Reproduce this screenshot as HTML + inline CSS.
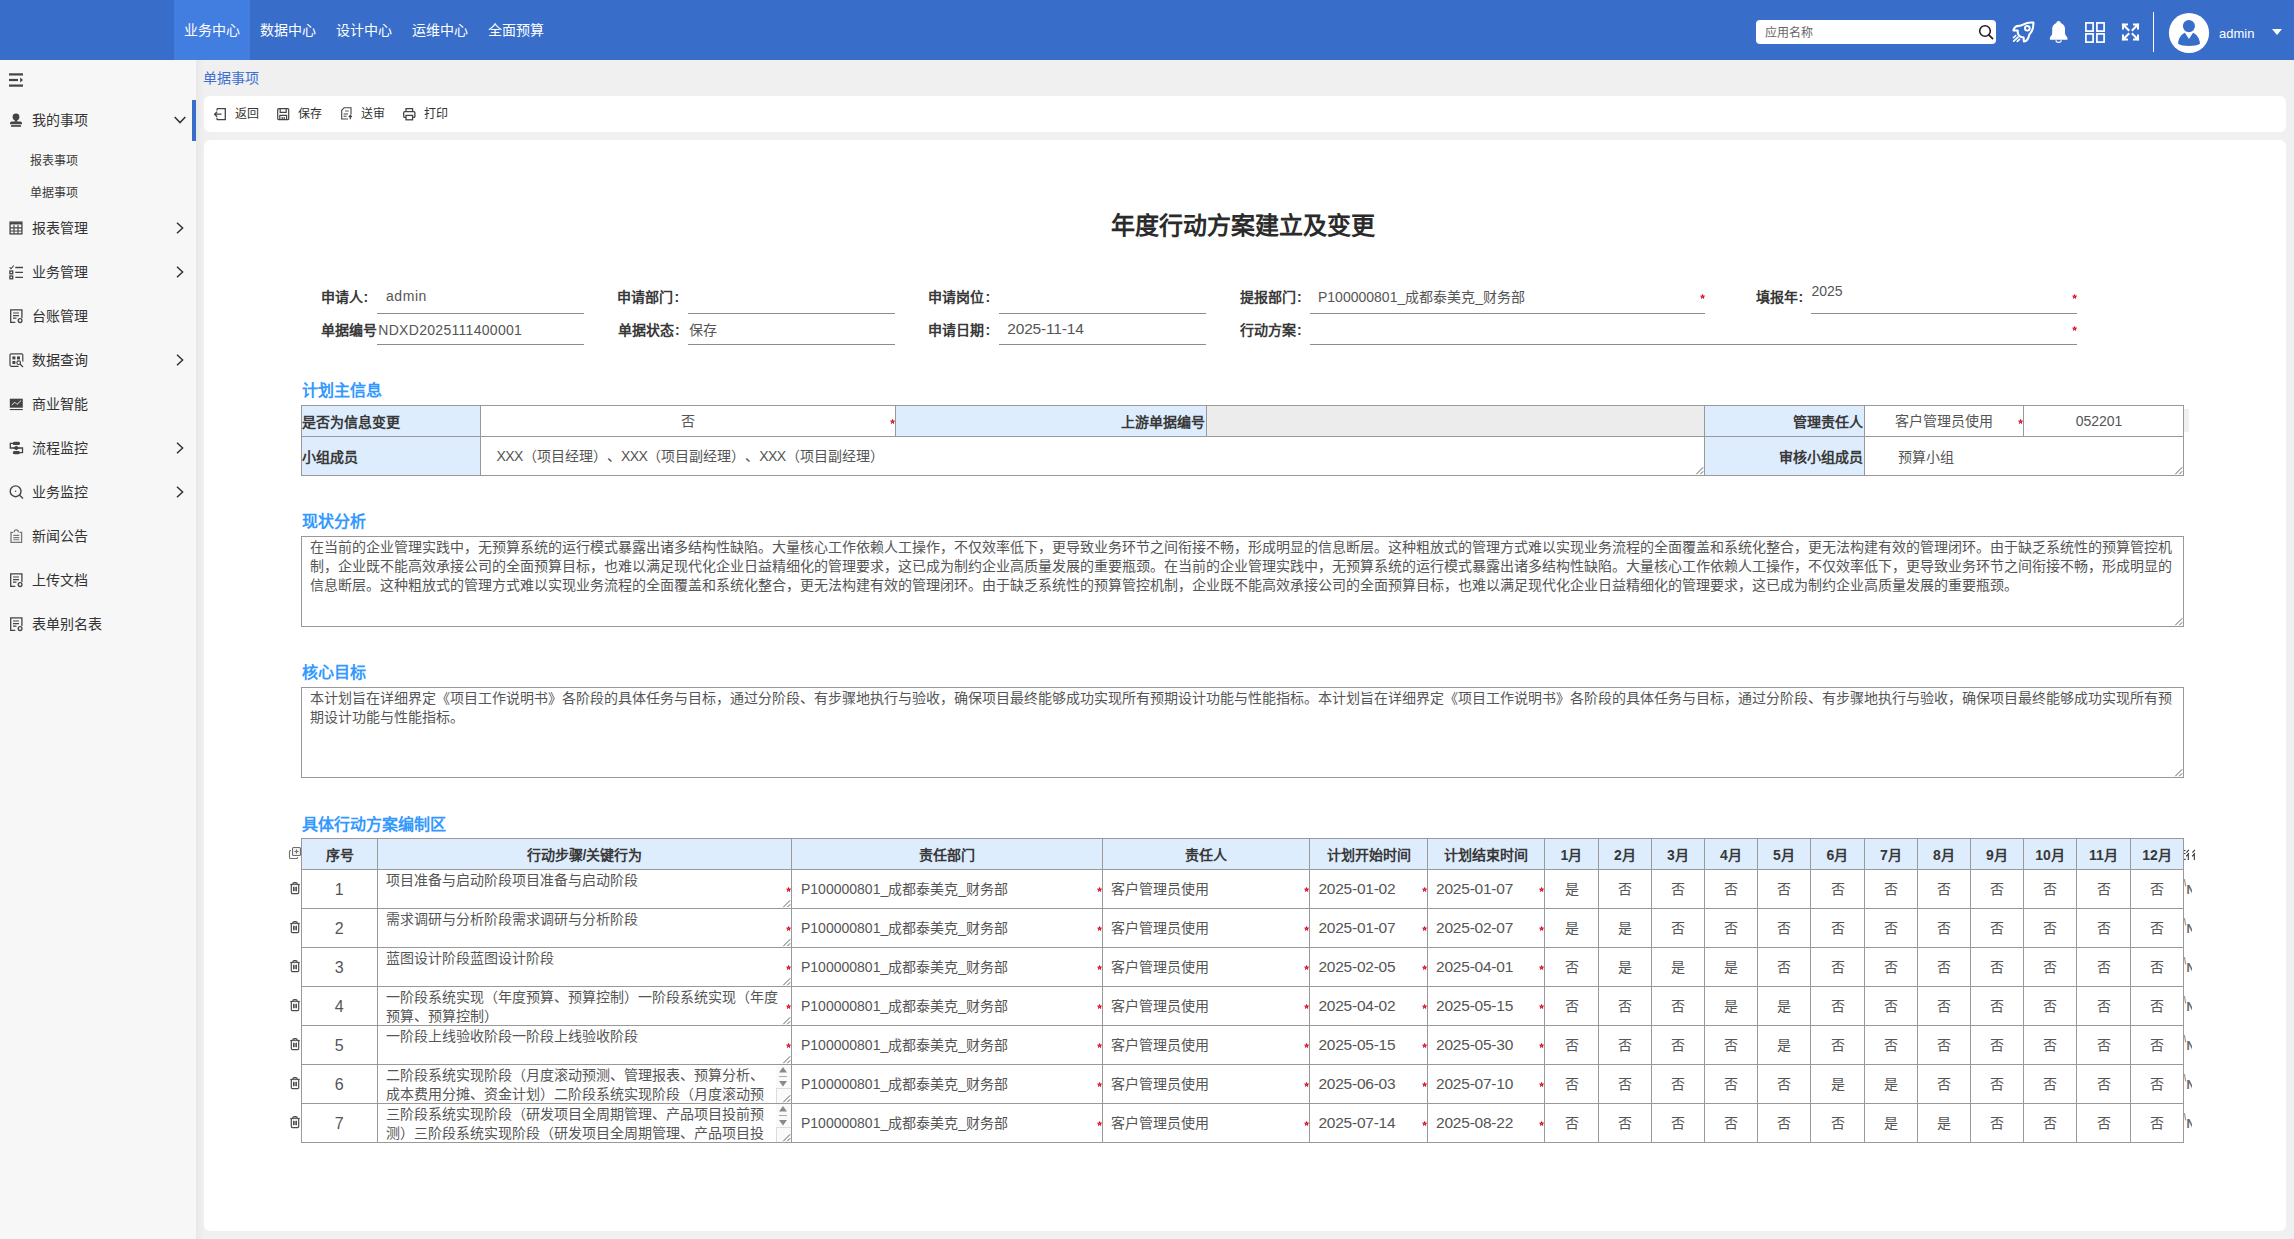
<!DOCTYPE html>
<html lang="zh-CN"><head><meta charset="utf-8"><title>年度行动方案建立及变更</title>
<style>
*{box-sizing:border-box;margin:0;padding:0}
html,body{width:2294px;height:1239px;overflow:hidden}
body{position:relative;text-spacing-trim:space-all;background:#f0f0f0;font-family:"Liberation Sans",sans-serif;color:#333;font-size:14px}
.a{position:absolute}
.t{position:absolute;white-space:nowrap;height:20px;line-height:20px}
.b{font-weight:bold;color:#383838}
.c{text-align:center}
.r{text-align:right}
.hl{position:absolute;height:1px;background:#999}
.vl{position:absolute;width:1px;background:#999}
.ul{position:absolute;height:1px;background:#8c8c8c}
.st{position:absolute;color:#d9001b;font-weight:bold;font-size:11px;line-height:12px;height:12px;width:8px;text-align:center}
svg{position:absolute;overflow:visible}
</style></head>
<body>
<header>
<div class="a" style="left:0px;top:0px;width:2294px;height:60px;background:#386ec9;"></div>
<div class="a" style="left:174px;top:0px;width:76px;height:60px;background:#427de0;"></div>
<div class="t c" style="left:174px;width:76px;top:20px;color:#fff;">业务中心</div>
<div class="t c" style="left:250px;width:76px;top:20px;color:#fff;">数据中心</div>
<div class="t c" style="left:326px;width:76px;top:20px;color:#fff;">设计中心</div>
<div class="t c" style="left:402px;width:76px;top:20px;color:#fff;">运维中心</div>
<div class="t c" style="left:478px;width:76px;top:20px;color:#fff;">全面预算</div>
<div class="a" style="left:1756px;top:20px;width:240px;height:24px;background:#fff;border-radius:4px;"></div>
<div class="t" style="left:1765px;top:22.5px;font-size:12px;color:#666;">应用名称</div>
<svg style="left:1978px;top:24px" width="16" height="16" viewBox="0 0 16 16"><circle cx="7" cy="7" r="5.3" fill="none" stroke="#222" stroke-width="1.6"/><path d="M10.8 10.8L14.6 14.6" stroke="#222" stroke-width="1.7" stroke-linecap="round"/></svg>
<svg style="left:2012px;top:21px" width="23" height="22" viewBox="0 0 23 22"><g fill="none" stroke="#fff" stroke-width="2.100" stroke-linejoin="round" stroke-linecap="round"><path d="M21.400 1.600C17.800 1.200 14.600 1.700 12.200 3.200C10.200 4.500 8.400 5.300 4.600 5.100C2.800 6 1.700 7.600 1.500 9.500L5.700 9.500C5.500 11.400 5.900 13.200 7 14.700C8.300 15.800 9.900 16.400 11.600 16.500L11.900 20.500C13.400 20.400 14.500 19.800 15.100 18.900C16.200 17.300 17 15.500 17.300 13.600C20.300 10.500 21.600 6.500 21.400 1.600Z"/><circle cx="15.300" cy="7.300" r="2.350" stroke-width="1.900"/><path d="M1.500 16.600L3.700 14.600M1.700 20.200L6.100 16.200M5.300 20.400L7.500 18.400" stroke-width="1.700"/></g></svg>
<svg style="left:2049px;top:21px" width="19" height="22.5" viewBox="0 0 19 22.5"><path d="M9.600 0.100C8.400 0.100 7.800 0.900 7.300 1.900C4.900 2.900 3.200 4.800 3.200 7.500V12C3.200 14 1.700 15.300 0.900 16.500V18.800H18.400V16.500C17.500 15.300 16 14 16 12V7.500C16 4.800 14.300 2.900 11.900 1.900C11.400 0.900 10.800 0.100 9.600 0.100Z" fill="#fff"/><path d="M7 19.200a2.600 2.200 0 0 0 5.200 0" fill="none" stroke="#fff" stroke-width="1.200"/></svg>
<svg style="left:2085px;top:21.5px" width="20" height="21" viewBox="0 0 20 21"><g fill="none" stroke="#fff" stroke-width="1.700"><rect x="0.900" y="0.900" width="7.200" height="8.200"/><rect x="11.900" y="0.900" width="7.200" height="8.200"/><rect x="0.900" y="11.900" width="7.200" height="8.200"/><rect x="11.900" y="11.900" width="7.200" height="8.200"/></g></svg>
<svg style="left:2121px;top:23px" width="19" height="18" viewBox="0 0 19 18"><g fill="none" stroke="#fff" stroke-width="2" stroke-linecap="square"><path d="M2 1.500L7.500 7M2 5.500V1.500H6"/><path d="M17 1.500L11.500 7M13 1.500H17V5.500"/><path d="M7.500 11L2 16.500M2 12.500V16.500H6"/><path d="M11.500 11L17 16.500M17 12.500V16.500H13"/></g></svg>
<div class="a" style="left:2153px;top:12px;width:1px;height:40px;background:#fff;"></div>
<svg style="left:2169px;top:12.8px" width="40" height="40" viewBox="0 0 40 40"><circle cx="20" cy="20" r="20.100" fill="#fff"/><circle cx="19.900" cy="13.100" r="6.050" fill="#386ec9"/><path d="M9.100 30.700C9.400 25.500 12 21.500 15.900 19.800L20 25.900 24 19.800C28 21.500 30.600 25.500 31 30.700C27 33.700 13 33.700 9.100 30.700Z" fill="#386ec9"/></svg>
<div class="t" style="left:2219px;top:23.5px;font-size:13px;color:#fff;">admin</div>
<svg style="left:2271.5px;top:28.8px" width="10" height="6" viewBox="0 0 10 6"><path d="M0 0H10L5 6Z" fill="#fff"/></svg>
</header>
<aside>
<div class="a" style="left:0px;top:60px;width:196px;height:1179px;background:#f7f7f7;"></div>
<div class="a" style="left:196px;top:60px;width:8px;height:1179px;background:linear-gradient(90deg,#e8e8e8,#f0f0f0);"></div>
<div class="a" style="left:192px;top:100px;width:4px;height:41px;background:#386ec9;"></div>
<svg style="left:9px;top:73px" width="15" height="14" viewBox="0 0 15 14"><g fill="#444"><rect x="0" y="0.300" width="14" height="2.200"/><rect x="0" y="5.900" width="9" height="2.200"/><rect x="0" y="11.500" width="14" height="2.200"/><path d="M11.100 4.500L14 7 11.100 9.500Z"/></g></svg>
<svg style="left:9px;top:113.2px" width="15" height="14" viewBox="0 0 15 14"><g fill="#444"><circle cx="7" cy="3.900" r="3.400"/><rect x="5.800" y="6" width="2.400" height="4"/><path d="M2.600 8.600H11.400Q13 8.600 13 10.200V11.300H1V10.200Q1 8.600 2.600 8.600Z"/><rect x="2" y="12.100" width="10" height="1.700"/></g></svg>
<div class="t" style="left:32px;top:110px;">我的事项</div>
<svg style="left:174px;top:115.5px" width="12" height="8" viewBox="0 0 12 8"><path d="M0.700 1L6 6.600 11.300 1" fill="none" stroke="#333" stroke-width="1.500"/></svg>
<div class="t" style="left:30px;top:151px;font-size:12px;color:#3a3a3a;">报表事项</div>
<div class="t" style="left:30px;top:183px;font-size:12px;color:#3a3a3a;">单据事项</div>
<svg style="left:9px;top:221px" width="15" height="14" viewBox="0 0 15 14"><g fill="none" stroke="#444"><rect x="1.100" y="1.100" width="11.800" height="11.800" stroke-width="1.300"/><path d="M1 2.400H13" stroke-width="2.100"/><path d="M1 6.900H13M1 10H13M5 4V13M9 4V13" stroke-width="1.100"/></g></svg>
<div class="t" style="left:32px;width:140px;overflow:hidden;top:218px;">报表管理</div>
<svg style="left:176px;top:222px" width="8" height="12" viewBox="0 0 8 12"><path d="M1 0.700L6.600 6 1 11.300" fill="none" stroke="#333" stroke-width="1.500"/></svg>
<svg style="left:9px;top:265px" width="15" height="14" viewBox="0 0 15 14"><g fill="none" stroke="#444" stroke-width="1.300"><path d="M0.600 2.300L2 3.700 4.800 0.500" stroke-width="1.100"/><rect x="0.900" y="6" width="2.800" height="2.800"/><rect x="0.900" y="11" width="2.800" height="2.800"/><path d="M6.300 2.500H14M6.300 7.400H14M6.300 12.400H14"/></g></svg>
<div class="t" style="left:32px;width:140px;overflow:hidden;top:262px;">业务管理</div>
<svg style="left:176px;top:266px" width="8" height="12" viewBox="0 0 8 12"><path d="M1 0.700L6.600 6 1 11.300" fill="none" stroke="#333" stroke-width="1.500"/></svg>
<svg style="left:9px;top:309px" width="15" height="14" viewBox="0 0 15 14"><g fill="none" stroke="#444" stroke-width="1.300"><path d="M6.300 13.300H1.700V0.900H12.900V9"/><path d="M4 4H10M4 6.600H10M4 9.200H7.500" stroke-width="1.200"/><circle cx="11.100" cy="11.600" r="1.900"/></g></svg>
<div class="t" style="left:32px;width:140px;overflow:hidden;top:306px;">台账管理</div>
<svg style="left:9px;top:353px" width="15" height="14" viewBox="0 0 15 14"><g fill="none" stroke="#444" stroke-width="1.200"><path d="M9.500 13.300H2.200Q1 13.300 1 12.100V2.100Q1 0.900 2.200 0.900H12.600Q13.800 0.900 13.800 2.100V8.500"/><g fill="#444" stroke="none"><rect x="3.400" y="3.400" width="3" height="3"/><rect x="8" y="3.400" width="3" height="3"/><rect x="3.400" y="8" width="3" height="3"/></g><circle cx="9.700" cy="9.700" r="1.800"/><path d="M11 11L14 14"/></g></svg>
<div class="t" style="left:32px;width:140px;overflow:hidden;top:350px;">数据查询</div>
<svg style="left:176px;top:354px" width="8" height="12" viewBox="0 0 8 12"><path d="M1 0.700L6.600 6 1 11.300" fill="none" stroke="#333" stroke-width="1.500"/></svg>
<svg style="left:9px;top:397px" width="15" height="14" viewBox="0 0 15 14"><g><rect x="0.800" y="1.700" width="13" height="9" fill="#444"/><rect x="0.800" y="12" width="13" height="1.100" fill="#444"/><path d="M2.800 8L5.800 5.200 8 7.400 12.200 3.400" fill="none" stroke="#f7f7f7" stroke-width="0.900"/></g></svg>
<div class="t" style="left:32px;width:140px;overflow:hidden;top:394px;">商业智能</div>
<svg style="left:9px;top:441px" width="15" height="14" viewBox="0 0 15 14"><g fill="none" stroke="#444" stroke-width="1.300"><rect x="4.400" y="1.400" width="6" height="2" rx="1" fill="#444"/><rect x="4.400" y="10.600" width="6" height="2" rx="1" fill="#444"/><path d="M7.300 5.600L9.600 7 7.300 8.400 5 7Z" fill="#444"/><path d="M4.400 2.400H1.300V7H5M10.400 11.600H13.500V7H9.600"/></g></svg>
<div class="t" style="left:32px;width:140px;overflow:hidden;top:438px;">流程监控</div>
<svg style="left:176px;top:442px" width="8" height="12" viewBox="0 0 8 12"><path d="M1 0.700L6.600 6 1 11.300" fill="none" stroke="#333" stroke-width="1.500"/></svg>
<svg style="left:9px;top:485px" width="15" height="14" viewBox="0 0 15 14"><g fill="none" stroke="#444" stroke-width="1.400"><circle cx="6.600" cy="6.300" r="5.400"/><path d="M10.600 10.300L14 13.600"/><circle cx="6.600" cy="6.300" r="0.700" fill="#444" stroke="none"/></g></svg>
<div class="t" style="left:32px;width:140px;overflow:hidden;top:482px;">业务监控</div>
<svg style="left:176px;top:486px" width="8" height="12" viewBox="0 0 8 12"><path d="M1 0.700L6.600 6 1 11.300" fill="none" stroke="#333" stroke-width="1.500"/></svg>
<svg style="left:9px;top:529px" width="15" height="14" viewBox="0 0 15 14"><g fill="none" stroke="#777" stroke-width="1.300"><!--#444--><path d="M4.200 3.300H2V13.300H12.600V3.300H10.400"/><path d="M5.300 3.300Q5.300 0.800 7.300 0.800Q9.300 0.800 9.300 3.300" /><path d="M4.300 6.400H10.300M4.300 8.600H10.300M4.300 10.800H10.300" stroke-width="1.100"/></g></svg>
<div class="t" style="left:32px;width:140px;overflow:hidden;top:526px;">新闻公告</div>
<svg style="left:9px;top:573px" width="15" height="14" viewBox="0 0 15 14"><g fill="none" stroke="#444" stroke-width="1.300"><path d="M6.300 13.300H1.700V0.900H12.900V9"/><path d="M4 4H10M4 6.600H10M4 9.200H7.500" stroke-width="1.200"/><circle cx="11.100" cy="11.600" r="1.900"/></g></svg>
<div class="t" style="left:32px;width:140px;overflow:hidden;top:570px;">上传文档</div>
<svg style="left:9px;top:617px" width="15" height="14" viewBox="0 0 15 14"><g fill="none" stroke="#444" stroke-width="1.300"><path d="M6.300 13.300H1.700V0.900H12.900V9"/><path d="M4 4H10M4 6.600H10M4 9.200H7.500" stroke-width="1.200"/><circle cx="11.100" cy="11.600" r="1.900"/></g></svg>
<div class="t" style="left:32px;width:140px;overflow:hidden;top:614px;">表单别名表</div>
</aside>
<main>
<div class="t" style="left:203.3px;top:68px;color:#3d6fd1;">单据事项</div>
<div class="a" style="left:204px;top:96px;width:2082px;height:36px;background:#fff;border-radius:6px;"></div>
<svg style="left:214px;top:107.5px" width="12" height="12.5" viewBox="0 0 12 12.5"><g fill="none" stroke="#444" stroke-width="1.300"><path d="M3 0.700H11.300V11.700H3M3 0.700V2.600M3 11.700V9.800"/><path d="M0.600 6.200H7.500M3.200 3.600L0.600 6.200 3.200 8.800"/></g></svg>
<div class="t" style="left:234.8px;top:103.6px;font-size:12px;">返回</div>
<svg style="left:276.8px;top:107.5px" width="12.5" height="12.5" viewBox="0 0 12.5 12.5"><g fill="none" stroke="#444" stroke-width="1.200"><rect x="0.700" y="0.700" width="11" height="11" rx="1"/><path d="M3.200 0.700V4.400H9.200V0.700M2.800 11.700V7.300H9.600V11.700M5.200 9V11.500M7.200 9V11.500"/></g></svg>
<div class="t" style="left:298.2px;top:103.6px;font-size:12px;">保存</div>
<svg style="left:340.5px;top:107.3px" width="11" height="12.6" viewBox="0 0 11 12.6"><g fill="none" stroke="#444" stroke-width="1.100"><path d="M7 12H0.700V3.300L3.200 0.700H10V7.500"/><path d="M2.600 7H7M2.600 9.300H5.500" /><path d="M4 4H7.800" stroke="#999" stroke-width="1.600"/><path d="M9.300 12.300V8.400M7.800 10L9.300 8.400 10.800 10" stroke-width="1.200"/></g></svg>
<div class="t" style="left:361px;top:103.6px;font-size:12px;">送审</div>
<svg style="left:402.8px;top:107.5px" width="12.6" height="12.5" viewBox="0 0 12.6 12.5"><g fill="none" stroke="#444" stroke-width="1.300"><path d="M3 3.700V0.700H9.600V3.700"/><path d="M3 9.400H1.700Q0.700 9.400 0.700 8.400V4.700Q0.700 3.700 1.700 3.700H10.900Q11.900 3.700 11.900 4.700V8.400Q11.900 9.400 10.900 9.400H9.600"/><rect x="3" y="7.400" width="6.600" height="4.400"/></g></svg>
<div class="t" style="left:424px;top:103.6px;font-size:12px;">打印</div>
<div class="a" style="left:204px;top:140px;width:2082px;height:1091px;background:#fff;border-radius:6px;"></div>
<div class="t b c" style="left:1042.5px;width:400px;top:210.5px;height:30px;line-height:30px;font-size:24px;color:#2b2b2b;">年度行动方案建立及变更</div>
<div class="t b" style="left:320.5px;top:287px;">申请人<span style="margin-left:1px">:</span></div>
<div class="t" style="left:386px;top:286px;color:#555;letter-spacing:0.55px;">admin</div>
<div class="t b" style="left:321.2px;top:320.2px;">单据编号</div>
<div class="t" style="left:378.3px;top:319.7px;color:#555;letter-spacing:0.3px;">NDXD2025111400001</div>
<div class="ul" style="left:377px;top:313px;width:207px"></div>
<div class="ul" style="left:377px;top:344px;width:207px"></div>
<div class="t b" style="left:617.4px;top:287px;">申请部门<span style="margin-left:1px">:</span></div>
<div class="t b" style="left:618px;top:320.2px;">单据状态<span style="margin-left:1px">:</span></div>
<div class="t" style="left:688.5px;top:320.2px;color:#555;">保存</div>
<div class="ul" style="left:688px;top:313px;width:207px"></div>
<div class="ul" style="left:688px;top:344px;width:207px"></div>
<div class="t b" style="left:928.4px;top:287px;">申请岗位<span style="margin-left:1px">:</span></div>
<div class="t b" style="left:928.4px;top:320.2px;">申请日期<span style="margin-left:1px">:</span></div>
<div class="t" style="left:1007.3px;top:318.85px;font-size:15.5px;color:#555;letter-spacing:-0.18px;">2025-11-14</div>
<div class="ul" style="left:999px;top:313px;width:207px"></div>
<div class="ul" style="left:999px;top:344px;width:207px"></div>
<div class="t b" style="left:1240px;top:287px;">提报部门<span style="margin-left:1px">:</span></div>
<div class="t b" style="left:1240px;top:320.2px;">行动方案<span style="margin-left:1px">:</span></div>
<div class="t" style="left:1318px;top:287px;color:#555;">P100000801_成都泰美克_财务部</div>
<div class="ul" style="left:1310px;top:313px;width:395px"></div>
<div class="ul" style="left:1310px;top:344px;width:767px"></div>
<svg style="left:1699.8px;top:293.85px" width="5.200" height="5.200" viewBox="0 0 6 6"><path d="M3.00 2.05L3.00 0.85M3.90 2.71L5.04 2.34M3.56 3.77L4.26 4.74M2.44 3.77L1.74 4.74M2.10 2.71L0.96 2.34" stroke="#d9001b" stroke-width="1.35" stroke-linecap="round" fill="none"/></svg>
<svg style="left:2071.8px;top:293.85px" width="5.200" height="5.200" viewBox="0 0 6 6"><path d="M3.00 2.05L3.00 0.85M3.90 2.71L5.04 2.34M3.56 3.77L4.26 4.74M2.44 3.77L1.74 4.74M2.10 2.71L0.96 2.34" stroke="#d9001b" stroke-width="1.35" stroke-linecap="round" fill="none"/></svg>
<svg style="left:2071.8px;top:326.35px" width="5.200" height="5.200" viewBox="0 0 6 6"><path d="M3.00 2.05L3.00 0.85M3.90 2.71L5.04 2.34M3.56 3.77L4.26 4.74M2.44 3.77L1.74 4.74M2.10 2.71L0.96 2.34" stroke="#d9001b" stroke-width="1.35" stroke-linecap="round" fill="none"/></svg>
<div class="t b" style="left:1755.5px;top:287px;">填报年<span style="margin-left:1px">:</span></div>
<div class="t" style="left:1811.5px;top:280.5px;color:#555;">2025</div>
<div class="ul" style="left:1811px;top:313px;width:266px"></div>
<section>
<div class="t b" style="left:301.5px;top:379.7px;height:22px;line-height:22px;font-size:16px;color:#3399ff;">计划主信息</div>
<div class="a" style="left:301px;top:405px;width:1883px;height:71px;background:#fff;border:1px solid #999;"></div>
<div class="a" style="left:302px;top:406px;width:178px;height:69px;background:#ddedfd;"></div>
<div class="a" style="left:896px;top:406px;width:310px;height:30px;background:#ddedfd;"></div>
<div class="a" style="left:1207px;top:406px;width:497px;height:30px;background:#ececec;"></div>
<div class="a" style="left:1705px;top:406px;width:159px;height:69px;background:#ddedfd;"></div>
<div class="a" style="left:2184px;top:409px;width:5px;height:23px;background:#f0f0f0;"></div>
<div class="hl" style="left:301px;top:436px;width:1883px"></div>
<div class="vl" style="left:480px;top:405px;height:71px"></div>
<div class="vl" style="left:895px;top:405px;height:32px"></div>
<div class="vl" style="left:1206px;top:405px;height:32px"></div>
<div class="vl" style="left:1704px;top:405px;height:71px"></div>
<div class="vl" style="left:1864px;top:405px;height:71px"></div>
<div class="vl" style="left:2023px;top:405px;height:32px"></div>
<div class="t b" style="left:302px;top:412px;">是否为信息变更</div>
<div class="t b" style="left:302px;top:447px;">小组成员</div>
<div class="t c" style="left:638px;width:100px;top:411.3px;color:#555;">否</div>
<svg style="left:889.8px;top:418.85px" width="5.200" height="5.200" viewBox="0 0 6 6"><path d="M3.00 2.05L3.00 0.85M3.90 2.71L5.04 2.34M3.56 3.77L4.26 4.74M2.44 3.77L1.74 4.74M2.10 2.71L0.96 2.34" stroke="#d9001b" stroke-width="1.35" stroke-linecap="round" fill="none"/></svg>
<div class="t b r" style="left:805px;width:400px;top:412px;">上游单据编号</div>
<div class="t b r" style="left:1463px;width:400px;top:412px;">管理责任人</div>
<div class="t b r" style="left:1463px;width:400px;top:447.3px;">审核小组成员</div>
<div class="t" style="left:1894.5px;top:411px;color:#555;">客户管理员使用</div>
<svg style="left:2017.8px;top:418.85px" width="5.200" height="5.200" viewBox="0 0 6 6"><path d="M3.00 2.05L3.00 0.85M3.90 2.71L5.04 2.34M3.56 3.77L4.26 4.74M2.44 3.77L1.74 4.74M2.10 2.71L0.96 2.34" stroke="#d9001b" stroke-width="1.35" stroke-linecap="round" fill="none"/></svg>
<div class="t c" style="left:2049px;width:100px;top:411px;color:#555;">052201</div>
<div class="t" style="left:1897.5px;top:447px;color:#555;">预算小组</div>
<div class="t" style="left:496.5px;width:1200px;overflow:hidden;top:446px;color:#555;"><span style="letter-spacing:-0.550px">XXX</span>（项目经理）、<span style="letter-spacing:-0.550px">XXX</span>（项目副经理）、<span style="letter-spacing:-0.550px">XXX</span>（项目副经理）</div>
<svg style="left:1695.7px;top:466.7px" width="7.5" height="7.5" viewBox="0 0 7.5 7.5"><path d="M0.300 7.200L7.200 0.300M4.300 7.200L7.200 4.300" stroke="#555" stroke-width="0.950" fill="none"/></svg>
<svg style="left:2174.7px;top:466.7px" width="7.5" height="7.5" viewBox="0 0 7.5 7.5"><path d="M0.300 7.200L7.200 0.300M4.300 7.200L7.200 4.300" stroke="#555" stroke-width="0.950" fill="none"/></svg>
</section>
<section>
<div class="t b" style="left:301.5px;top:511.4px;height:22px;line-height:22px;font-size:16px;color:#3399ff;">现状分析</div>
<div class="a" style="left:301px;top:536px;width:1883px;height:91px;background:#fff;border:1px solid #999;"></div>
<div class="t" style="left:310px;width:1868px;overflow:hidden;top:536.5px;color:#555;">在当前的企业管理实践中，无预算系统的运行模式暴露出诸多结构性缺陷。大量核心工作依赖人工操作，不仅效率低下，更导致业务环节之间衔接不畅，形成明显的信息断层。这种粗放式的管理方式难以实现业务流程的全面覆盖和系统化整合，更无法构建有效的管理闭环。由于缺乏系统性的预算管控机</div>
<div class="t" style="left:310px;width:1868px;overflow:hidden;top:555.5px;color:#555;">制，企业既不能高效承接公司的全面预算目标，也难以满足现代化企业日益精细化的管理要求，这已成为制约企业高质量发展的重要瓶颈。在当前的企业管理实践中，无预算系统的运行模式暴露出诸多结构性缺陷。大量核心工作依赖人工操作，不仅效率低下，更导致业务环节之间衔接不畅，形成明显的</div>
<div class="t" style="left:310px;width:1868px;overflow:hidden;top:574.5px;color:#555;">信息断层。这种粗放式的管理方式难以实现业务流程的全面覆盖和系统化整合，更无法构建有效的管理闭环。由于缺乏系统性的预算管控机制，企业既不能高效承接公司的全面预算目标，也难以满足现代化企业日益精细化的管理要求，这已成为制约企业高质量发展的重要瓶颈。</div>
<svg style="left:2174.7px;top:617.7px" width="7.5" height="7.5" viewBox="0 0 7.5 7.5"><path d="M0.300 7.200L7.200 0.300M4.300 7.200L7.200 4.300" stroke="#555" stroke-width="0.950" fill="none"/></svg>
</section>
<section>
<div class="t b" style="left:301.5px;top:662.4px;height:22px;line-height:22px;font-size:16px;color:#3399ff;">核心目标</div>
<div class="a" style="left:301px;top:687px;width:1883px;height:91px;background:#fff;border:1px solid #999;"></div>
<div class="t" style="left:310px;width:1868px;overflow:hidden;top:687.5px;color:#555;">本计划旨在详细界定《项目工作说明书》各阶段的具体任务与目标，通过分阶段、有步骤地执行与验收，确保项目最终能够成功实现所有预期设计功能与性能指标。本计划旨在详细界定《项目工作说明书》各阶段的具体任务与目标，通过分阶段、有步骤地执行与验收，确保项目最终能够成功实现所有预</div>
<div class="t" style="left:310px;width:1868px;overflow:hidden;top:706.5px;color:#555;">期设计功能与性能指标。</div>
<svg style="left:2174.7px;top:768.7px" width="7.5" height="7.5" viewBox="0 0 7.5 7.5"><path d="M0.300 7.200L7.200 0.300M4.300 7.200L7.200 4.300" stroke="#555" stroke-width="0.950" fill="none"/></svg>
</section>
<section>
<div class="t b" style="left:301.5px;top:813.5px;height:22px;line-height:22px;font-size:16px;color:#3399ff;">具体行动方案编制区</div>
<div class="a" style="left:301px;top:838px;width:1883px;height:305px;background:#fff;border:1px solid #999;"></div>
<div class="a" style="left:302px;top:839px;width:1881px;height:30px;background:#ddedfd;"></div>
<div class="hl" style="left:301px;top:869px;width:1883px"></div>
<div class="hl" style="left:301px;top:908px;width:1883px"></div>
<div class="hl" style="left:301px;top:947px;width:1883px"></div>
<div class="hl" style="left:301px;top:986px;width:1883px"></div>
<div class="hl" style="left:301px;top:1025px;width:1883px"></div>
<div class="hl" style="left:301px;top:1064px;width:1883px"></div>
<div class="hl" style="left:301px;top:1103px;width:1883px"></div>
<div class="vl" style="left:377px;top:838px;height:305px"></div>
<div class="vl" style="left:791px;top:838px;height:305px"></div>
<div class="vl" style="left:1102px;top:838px;height:305px"></div>
<div class="vl" style="left:1309px;top:838px;height:305px"></div>
<div class="vl" style="left:1427px;top:838px;height:305px"></div>
<div class="vl" style="left:1544px;top:838px;height:305px"></div>
<div class="vl" style="left:1598px;top:838px;height:305px"></div>
<div class="vl" style="left:1651px;top:838px;height:305px"></div>
<div class="vl" style="left:1704px;top:838px;height:305px"></div>
<div class="vl" style="left:1757px;top:838px;height:305px"></div>
<div class="vl" style="left:1810px;top:838px;height:305px"></div>
<div class="vl" style="left:1864px;top:838px;height:305px"></div>
<div class="vl" style="left:1917px;top:838px;height:305px"></div>
<div class="vl" style="left:1970px;top:838px;height:305px"></div>
<div class="vl" style="left:2023px;top:838px;height:305px"></div>
<div class="vl" style="left:2076px;top:838px;height:305px"></div>
<div class="vl" style="left:2130px;top:838px;height:305px"></div>
<div class="t b c" style="left:301.5px;width:76px;top:845.3px;">序号</div>
<div class="t b c" style="left:377.5px;width:414px;top:845.3px;">行动步骤/关键行为</div>
<div class="t b c" style="left:791.5px;width:311px;top:845.3px;">责任部门</div>
<div class="t b c" style="left:1102.5px;width:207px;top:845.3px;">责任人</div>
<div class="t b c" style="left:1309.5px;width:118px;top:845.3px;">计划开始时间</div>
<div class="t b c" style="left:1427.5px;width:117px;top:845.3px;">计划结束时间</div>
<div class="t b c" style="left:1544.5px;width:54px;top:845.3px;">1月</div>
<div class="t b c" style="left:1598.5px;width:53px;top:845.3px;">2月</div>
<div class="t b c" style="left:1651.5px;width:53px;top:845.3px;">3月</div>
<div class="t b c" style="left:1704.5px;width:53px;top:845.3px;">4月</div>
<div class="t b c" style="left:1757.5px;width:53px;top:845.3px;">5月</div>
<div class="t b c" style="left:1810.5px;width:54px;top:845.3px;">6月</div>
<div class="t b c" style="left:1864.5px;width:53px;top:845.3px;">7月</div>
<div class="t b c" style="left:1917.5px;width:53px;top:845.3px;">8月</div>
<div class="t b c" style="left:1970.5px;width:53px;top:845.3px;">9月</div>
<div class="t b c" style="left:2023.5px;width:53px;top:845.3px;">10月</div>
<div class="t b c" style="left:2076.5px;width:54px;top:845.3px;">11月</div>
<div class="t b c" style="left:2130.5px;width:53px;top:845.3px;">12月</div>
<svg style="left:288.8px;top:847px" width="12" height="12" viewBox="0 0 12 12"><g fill="none" stroke="#6e6e6e" stroke-width="1.100"><rect x="3.500" y="0.500" width="8" height="8" rx="1" fill="#f1f1f1"/><path d="M2 3.500H1.500Q0.500 3.500 0.500 4.500V10.500Q0.500 11.500 1.500 11.500H7.500Q8.500 11.500 8.500 10.500V10"/><path d="M5.500 4.500H9.500M7.500 2.500V6.500"/></g></svg>
<svg style="left:2184px;top:849px" width="12" height="12" viewBox="0 0 12 12"><g fill="none" stroke="#333" stroke-width="1.100"><path d="M0 1.600H1.600M0 4.600H1.600M0 10.300H1.800" stroke-width="1"/><path d="M4.900 0.900L2.400 3.700M4.900 4.200L2.200 7.400M4.300 5.600V11"/><path d="M10.900 0.900L8.400 3.700M10.900 4.200L8.200 7.400M10.300 5.600V11"/></g></svg>
<svg style="left:289.8px;top:882.1px" width="10" height="12.4" viewBox="0 0 10 12.4"><g fill="none" stroke="#4a4a4a" stroke-width="1.200"><path d="M0.300 2.500H9.700"/><path d="M2.700 2.300Q2.800 0.700 4.300 0.700H5.700Q7.200 0.700 7.300 2.300" fill="#bbb"/><path d="M1.300 2.700V10.600Q1.300 11.700 2.400 11.700H7.600Q8.700 11.700 8.700 10.600V2.700"/><rect x="3.300" y="5" width="3.400" height="4" fill="#aaa" stroke="none"/><path d="M3.700 4.800V9.200M6.300 4.800V9.200" stroke-width="1.300"/></g></svg>
<div class="t c" style="left:309.3px;width:60px;top:879.7px;font-size:16px;color:#555;">1</div>
<div class="t" style="left:386px;width:398px;overflow:hidden;top:870.2px;color:#555;">项目准备与启动阶段项目准备与启动阶段</div>
<svg style="left:782.7px;top:899.7px" width="7.5" height="7.5" viewBox="0 0 7.5 7.5"><path d="M0.300 7.200L7.200 0.300M4.300 7.200L7.200 4.300" stroke="#555" stroke-width="0.950" fill="none"/></svg>
<svg style="left:785.8px;top:887.05px" width="5.200" height="5.200" viewBox="0 0 6 6"><path d="M3.00 2.05L3.00 0.85M3.90 2.71L5.04 2.34M3.56 3.77L4.26 4.74M2.44 3.77L1.74 4.74M2.10 2.71L0.96 2.34" stroke="#d9001b" stroke-width="1.35" stroke-linecap="round" fill="none"/></svg>
<div class="t" style="left:801px;width:294px;overflow:hidden;top:879.3px;color:#555;">P100000801_成都泰美克_财务部</div>
<svg style="left:1096.8px;top:887.05px" width="5.200" height="5.200" viewBox="0 0 6 6"><path d="M3.00 2.05L3.00 0.85M3.90 2.71L5.04 2.34M3.56 3.77L4.26 4.74M2.44 3.77L1.74 4.74M2.10 2.71L0.96 2.34" stroke="#d9001b" stroke-width="1.35" stroke-linecap="round" fill="none"/></svg>
<div class="t" style="left:1110.8px;width:192px;overflow:hidden;top:879.3px;color:#555;">客户管理员使用</div>
<svg style="left:1303.8px;top:887.05px" width="5.200" height="5.200" viewBox="0 0 6 6"><path d="M3.00 2.05L3.00 0.85M3.90 2.71L5.04 2.34M3.56 3.77L4.26 4.74M2.44 3.77L1.74 4.74M2.10 2.71L0.96 2.34" stroke="#d9001b" stroke-width="1.35" stroke-linecap="round" fill="none"/></svg>
<div class="t" style="left:1318.4px;top:878.85px;font-size:15.5px;color:#555;letter-spacing:-0.23px;">2025-01-02</div>
<svg style="left:1421.8px;top:887.05px" width="5.200" height="5.200" viewBox="0 0 6 6"><path d="M3.00 2.05L3.00 0.85M3.90 2.71L5.04 2.34M3.56 3.77L4.26 4.74M2.44 3.77L1.74 4.74M2.10 2.71L0.96 2.34" stroke="#d9001b" stroke-width="1.35" stroke-linecap="round" fill="none"/></svg>
<div class="t" style="left:1436.1px;top:878.85px;font-size:15.5px;color:#555;letter-spacing:-0.23px;">2025-01-07</div>
<svg style="left:1538.8px;top:887.05px" width="5.200" height="5.200" viewBox="0 0 6 6"><path d="M3.00 2.05L3.00 0.85M3.90 2.71L5.04 2.34M3.56 3.77L4.26 4.74M2.44 3.77L1.74 4.74M2.10 2.71L0.96 2.34" stroke="#d9001b" stroke-width="1.35" stroke-linecap="round" fill="none"/></svg>
<div class="t c" style="left:1551.5px;width:40px;top:879.3px;color:#555;">是</div>
<div class="t c" style="left:1605px;width:40px;top:879.3px;color:#555;">否</div>
<div class="t c" style="left:1658px;width:40px;top:879.3px;color:#555;">否</div>
<div class="t c" style="left:1711px;width:40px;top:879.3px;color:#555;">否</div>
<div class="t c" style="left:1764px;width:40px;top:879.3px;color:#555;">否</div>
<div class="t c" style="left:1817.5px;width:40px;top:879.3px;color:#555;">否</div>
<div class="t c" style="left:1871px;width:40px;top:879.3px;color:#555;">否</div>
<div class="t c" style="left:1924px;width:40px;top:879.3px;color:#555;">否</div>
<div class="t c" style="left:1977px;width:40px;top:879.3px;color:#555;">否</div>
<div class="t c" style="left:2030px;width:40px;top:879.3px;color:#555;">否</div>
<div class="t c" style="left:2083.5px;width:40px;top:879.3px;color:#555;">否</div>
<div class="t c" style="left:2137px;width:40px;top:879.3px;color:#555;">否</div>
<svg style="left:2184px;top:879px" width="3" height="8" viewBox="0 0 3 8"><path d="M0.400 0.200L1.700 7.400" stroke="#999" stroke-width="1.200" fill="none"/></svg>
<div class="a" style="left:2184px;top:879.5px;width:8.200px;height:20px;overflow:hidden"><div class="t b" style="left:2.600px;top:0;color:#666;font-size:12px">N</div></div>
<svg style="left:289.8px;top:921.1px" width="10" height="12.4" viewBox="0 0 10 12.4"><g fill="none" stroke="#4a4a4a" stroke-width="1.200"><path d="M0.300 2.500H9.700"/><path d="M2.700 2.300Q2.800 0.700 4.300 0.700H5.700Q7.200 0.700 7.300 2.300" fill="#bbb"/><path d="M1.300 2.700V10.600Q1.300 11.700 2.400 11.700H7.600Q8.700 11.700 8.700 10.600V2.700"/><rect x="3.300" y="5" width="3.400" height="4" fill="#aaa" stroke="none"/><path d="M3.700 4.800V9.200M6.300 4.800V9.200" stroke-width="1.300"/></g></svg>
<div class="t c" style="left:309.3px;width:60px;top:918.7px;font-size:16px;color:#555;">2</div>
<div class="t" style="left:386px;width:398px;overflow:hidden;top:909.2px;color:#555;">需求调研与分析阶段需求调研与分析阶段</div>
<svg style="left:782.7px;top:938.7px" width="7.5" height="7.5" viewBox="0 0 7.5 7.5"><path d="M0.300 7.200L7.200 0.300M4.300 7.200L7.200 4.300" stroke="#555" stroke-width="0.950" fill="none"/></svg>
<svg style="left:785.8px;top:926.05px" width="5.200" height="5.200" viewBox="0 0 6 6"><path d="M3.00 2.05L3.00 0.85M3.90 2.71L5.04 2.34M3.56 3.77L4.26 4.74M2.44 3.77L1.74 4.74M2.10 2.71L0.96 2.34" stroke="#d9001b" stroke-width="1.35" stroke-linecap="round" fill="none"/></svg>
<div class="t" style="left:801px;width:294px;overflow:hidden;top:918.3px;color:#555;">P100000801_成都泰美克_财务部</div>
<svg style="left:1096.8px;top:926.05px" width="5.200" height="5.200" viewBox="0 0 6 6"><path d="M3.00 2.05L3.00 0.85M3.90 2.71L5.04 2.34M3.56 3.77L4.26 4.74M2.44 3.77L1.74 4.74M2.10 2.71L0.96 2.34" stroke="#d9001b" stroke-width="1.35" stroke-linecap="round" fill="none"/></svg>
<div class="t" style="left:1110.8px;width:192px;overflow:hidden;top:918.3px;color:#555;">客户管理员使用</div>
<svg style="left:1303.8px;top:926.05px" width="5.200" height="5.200" viewBox="0 0 6 6"><path d="M3.00 2.05L3.00 0.85M3.90 2.71L5.04 2.34M3.56 3.77L4.26 4.74M2.44 3.77L1.74 4.74M2.10 2.71L0.96 2.34" stroke="#d9001b" stroke-width="1.35" stroke-linecap="round" fill="none"/></svg>
<div class="t" style="left:1318.4px;top:917.85px;font-size:15.5px;color:#555;letter-spacing:-0.23px;">2025-01-07</div>
<svg style="left:1421.8px;top:926.05px" width="5.200" height="5.200" viewBox="0 0 6 6"><path d="M3.00 2.05L3.00 0.85M3.90 2.71L5.04 2.34M3.56 3.77L4.26 4.74M2.44 3.77L1.74 4.74M2.10 2.71L0.96 2.34" stroke="#d9001b" stroke-width="1.35" stroke-linecap="round" fill="none"/></svg>
<div class="t" style="left:1436.1px;top:917.85px;font-size:15.5px;color:#555;letter-spacing:-0.23px;">2025-02-07</div>
<svg style="left:1538.8px;top:926.05px" width="5.200" height="5.200" viewBox="0 0 6 6"><path d="M3.00 2.05L3.00 0.85M3.90 2.71L5.04 2.34M3.56 3.77L4.26 4.74M2.44 3.77L1.74 4.74M2.10 2.71L0.96 2.34" stroke="#d9001b" stroke-width="1.35" stroke-linecap="round" fill="none"/></svg>
<div class="t c" style="left:1551.5px;width:40px;top:918.3px;color:#555;">是</div>
<div class="t c" style="left:1605px;width:40px;top:918.3px;color:#555;">是</div>
<div class="t c" style="left:1658px;width:40px;top:918.3px;color:#555;">否</div>
<div class="t c" style="left:1711px;width:40px;top:918.3px;color:#555;">否</div>
<div class="t c" style="left:1764px;width:40px;top:918.3px;color:#555;">否</div>
<div class="t c" style="left:1817.5px;width:40px;top:918.3px;color:#555;">否</div>
<div class="t c" style="left:1871px;width:40px;top:918.3px;color:#555;">否</div>
<div class="t c" style="left:1924px;width:40px;top:918.3px;color:#555;">否</div>
<div class="t c" style="left:1977px;width:40px;top:918.3px;color:#555;">否</div>
<div class="t c" style="left:2030px;width:40px;top:918.3px;color:#555;">否</div>
<div class="t c" style="left:2083.5px;width:40px;top:918.3px;color:#555;">否</div>
<div class="t c" style="left:2137px;width:40px;top:918.3px;color:#555;">否</div>
<svg style="left:2184px;top:918px" width="3" height="8" viewBox="0 0 3 8"><path d="M0.400 0.200L1.700 7.400" stroke="#999" stroke-width="1.200" fill="none"/></svg>
<div class="a" style="left:2184px;top:918.5px;width:8.200px;height:20px;overflow:hidden"><div class="t b" style="left:2.600px;top:0;color:#666;font-size:12px">N</div></div>
<svg style="left:289.8px;top:960.1px" width="10" height="12.4" viewBox="0 0 10 12.4"><g fill="none" stroke="#4a4a4a" stroke-width="1.200"><path d="M0.300 2.500H9.700"/><path d="M2.700 2.300Q2.800 0.700 4.300 0.700H5.700Q7.200 0.700 7.300 2.300" fill="#bbb"/><path d="M1.300 2.700V10.600Q1.300 11.700 2.400 11.700H7.600Q8.700 11.700 8.700 10.600V2.700"/><rect x="3.300" y="5" width="3.400" height="4" fill="#aaa" stroke="none"/><path d="M3.700 4.800V9.200M6.300 4.800V9.200" stroke-width="1.300"/></g></svg>
<div class="t c" style="left:309.3px;width:60px;top:957.7px;font-size:16px;color:#555;">3</div>
<div class="t" style="left:386px;width:398px;overflow:hidden;top:948.2px;color:#555;">蓝图设计阶段蓝图设计阶段</div>
<svg style="left:782.7px;top:977.7px" width="7.5" height="7.5" viewBox="0 0 7.5 7.5"><path d="M0.300 7.200L7.200 0.300M4.300 7.200L7.200 4.300" stroke="#555" stroke-width="0.950" fill="none"/></svg>
<svg style="left:785.8px;top:965.05px" width="5.200" height="5.200" viewBox="0 0 6 6"><path d="M3.00 2.05L3.00 0.85M3.90 2.71L5.04 2.34M3.56 3.77L4.26 4.74M2.44 3.77L1.74 4.74M2.10 2.71L0.96 2.34" stroke="#d9001b" stroke-width="1.35" stroke-linecap="round" fill="none"/></svg>
<div class="t" style="left:801px;width:294px;overflow:hidden;top:957.3px;color:#555;">P100000801_成都泰美克_财务部</div>
<svg style="left:1096.8px;top:965.05px" width="5.200" height="5.200" viewBox="0 0 6 6"><path d="M3.00 2.05L3.00 0.85M3.90 2.71L5.04 2.34M3.56 3.77L4.26 4.74M2.44 3.77L1.74 4.74M2.10 2.71L0.96 2.34" stroke="#d9001b" stroke-width="1.35" stroke-linecap="round" fill="none"/></svg>
<div class="t" style="left:1110.8px;width:192px;overflow:hidden;top:957.3px;color:#555;">客户管理员使用</div>
<svg style="left:1303.8px;top:965.05px" width="5.200" height="5.200" viewBox="0 0 6 6"><path d="M3.00 2.05L3.00 0.85M3.90 2.71L5.04 2.34M3.56 3.77L4.26 4.74M2.44 3.77L1.74 4.74M2.10 2.71L0.96 2.34" stroke="#d9001b" stroke-width="1.35" stroke-linecap="round" fill="none"/></svg>
<div class="t" style="left:1318.4px;top:956.85px;font-size:15.5px;color:#555;letter-spacing:-0.23px;">2025-02-05</div>
<svg style="left:1421.8px;top:965.05px" width="5.200" height="5.200" viewBox="0 0 6 6"><path d="M3.00 2.05L3.00 0.85M3.90 2.71L5.04 2.34M3.56 3.77L4.26 4.74M2.44 3.77L1.74 4.74M2.10 2.71L0.96 2.34" stroke="#d9001b" stroke-width="1.35" stroke-linecap="round" fill="none"/></svg>
<div class="t" style="left:1436.1px;top:956.85px;font-size:15.5px;color:#555;letter-spacing:-0.23px;">2025-04-01</div>
<svg style="left:1538.8px;top:965.05px" width="5.200" height="5.200" viewBox="0 0 6 6"><path d="M3.00 2.05L3.00 0.85M3.90 2.71L5.04 2.34M3.56 3.77L4.26 4.74M2.44 3.77L1.74 4.74M2.10 2.71L0.96 2.34" stroke="#d9001b" stroke-width="1.35" stroke-linecap="round" fill="none"/></svg>
<div class="t c" style="left:1551.5px;width:40px;top:957.3px;color:#555;">否</div>
<div class="t c" style="left:1605px;width:40px;top:957.3px;color:#555;">是</div>
<div class="t c" style="left:1658px;width:40px;top:957.3px;color:#555;">是</div>
<div class="t c" style="left:1711px;width:40px;top:957.3px;color:#555;">是</div>
<div class="t c" style="left:1764px;width:40px;top:957.3px;color:#555;">否</div>
<div class="t c" style="left:1817.5px;width:40px;top:957.3px;color:#555;">否</div>
<div class="t c" style="left:1871px;width:40px;top:957.3px;color:#555;">否</div>
<div class="t c" style="left:1924px;width:40px;top:957.3px;color:#555;">否</div>
<div class="t c" style="left:1977px;width:40px;top:957.3px;color:#555;">否</div>
<div class="t c" style="left:2030px;width:40px;top:957.3px;color:#555;">否</div>
<div class="t c" style="left:2083.5px;width:40px;top:957.3px;color:#555;">否</div>
<div class="t c" style="left:2137px;width:40px;top:957.3px;color:#555;">否</div>
<svg style="left:2184px;top:957px" width="3" height="8" viewBox="0 0 3 8"><path d="M0.400 0.200L1.700 7.400" stroke="#999" stroke-width="1.200" fill="none"/></svg>
<div class="a" style="left:2184px;top:957.5px;width:8.200px;height:20px;overflow:hidden"><div class="t b" style="left:2.600px;top:0;color:#666;font-size:12px">N</div></div>
<svg style="left:289.8px;top:999.1px" width="10" height="12.4" viewBox="0 0 10 12.4"><g fill="none" stroke="#4a4a4a" stroke-width="1.200"><path d="M0.300 2.500H9.700"/><path d="M2.700 2.300Q2.800 0.700 4.300 0.700H5.700Q7.200 0.700 7.300 2.300" fill="#bbb"/><path d="M1.300 2.700V10.600Q1.300 11.700 2.400 11.700H7.600Q8.700 11.700 8.700 10.600V2.700"/><rect x="3.300" y="5" width="3.400" height="4" fill="#aaa" stroke="none"/><path d="M3.700 4.800V9.200M6.300 4.800V9.200" stroke-width="1.300"/></g></svg>
<div class="t c" style="left:309.3px;width:60px;top:996.7px;font-size:16px;color:#555;">4</div>
<div class="t" style="left:386px;width:398px;overflow:hidden;top:987.2px;color:#555;">一阶段系统实现（年度预算、预算控制）一阶段系统实现（年度</div>
<div class="t" style="left:386px;width:398px;overflow:hidden;top:1006.2px;color:#555;">预算、预算控制）</div>
<svg style="left:782.7px;top:1016.7px" width="7.5" height="7.5" viewBox="0 0 7.5 7.5"><path d="M0.300 7.200L7.200 0.300M4.300 7.200L7.200 4.300" stroke="#555" stroke-width="0.950" fill="none"/></svg>
<svg style="left:785.8px;top:1004.05px" width="5.200" height="5.200" viewBox="0 0 6 6"><path d="M3.00 2.05L3.00 0.85M3.90 2.71L5.04 2.34M3.56 3.77L4.26 4.74M2.44 3.77L1.74 4.74M2.10 2.71L0.96 2.34" stroke="#d9001b" stroke-width="1.35" stroke-linecap="round" fill="none"/></svg>
<div class="t" style="left:801px;width:294px;overflow:hidden;top:996.3px;color:#555;">P100000801_成都泰美克_财务部</div>
<svg style="left:1096.8px;top:1004.05px" width="5.200" height="5.200" viewBox="0 0 6 6"><path d="M3.00 2.05L3.00 0.85M3.90 2.71L5.04 2.34M3.56 3.77L4.26 4.74M2.44 3.77L1.74 4.74M2.10 2.71L0.96 2.34" stroke="#d9001b" stroke-width="1.35" stroke-linecap="round" fill="none"/></svg>
<div class="t" style="left:1110.8px;width:192px;overflow:hidden;top:996.3px;color:#555;">客户管理员使用</div>
<svg style="left:1303.8px;top:1004.05px" width="5.200" height="5.200" viewBox="0 0 6 6"><path d="M3.00 2.05L3.00 0.85M3.90 2.71L5.04 2.34M3.56 3.77L4.26 4.74M2.44 3.77L1.74 4.74M2.10 2.71L0.96 2.34" stroke="#d9001b" stroke-width="1.35" stroke-linecap="round" fill="none"/></svg>
<div class="t" style="left:1318.4px;top:995.85px;font-size:15.5px;color:#555;letter-spacing:-0.23px;">2025-04-02</div>
<svg style="left:1421.8px;top:1004.05px" width="5.200" height="5.200" viewBox="0 0 6 6"><path d="M3.00 2.05L3.00 0.85M3.90 2.71L5.04 2.34M3.56 3.77L4.26 4.74M2.44 3.77L1.74 4.74M2.10 2.71L0.96 2.34" stroke="#d9001b" stroke-width="1.35" stroke-linecap="round" fill="none"/></svg>
<div class="t" style="left:1436.1px;top:995.85px;font-size:15.5px;color:#555;letter-spacing:-0.23px;">2025-05-15</div>
<svg style="left:1538.8px;top:1004.05px" width="5.200" height="5.200" viewBox="0 0 6 6"><path d="M3.00 2.05L3.00 0.85M3.90 2.71L5.04 2.34M3.56 3.77L4.26 4.74M2.44 3.77L1.74 4.74M2.10 2.71L0.96 2.34" stroke="#d9001b" stroke-width="1.35" stroke-linecap="round" fill="none"/></svg>
<div class="t c" style="left:1551.5px;width:40px;top:996.3px;color:#555;">否</div>
<div class="t c" style="left:1605px;width:40px;top:996.3px;color:#555;">否</div>
<div class="t c" style="left:1658px;width:40px;top:996.3px;color:#555;">否</div>
<div class="t c" style="left:1711px;width:40px;top:996.3px;color:#555;">是</div>
<div class="t c" style="left:1764px;width:40px;top:996.3px;color:#555;">是</div>
<div class="t c" style="left:1817.5px;width:40px;top:996.3px;color:#555;">否</div>
<div class="t c" style="left:1871px;width:40px;top:996.3px;color:#555;">否</div>
<div class="t c" style="left:1924px;width:40px;top:996.3px;color:#555;">否</div>
<div class="t c" style="left:1977px;width:40px;top:996.3px;color:#555;">否</div>
<div class="t c" style="left:2030px;width:40px;top:996.3px;color:#555;">否</div>
<div class="t c" style="left:2083.5px;width:40px;top:996.3px;color:#555;">否</div>
<div class="t c" style="left:2137px;width:40px;top:996.3px;color:#555;">否</div>
<svg style="left:2184px;top:996px" width="3" height="8" viewBox="0 0 3 8"><path d="M0.400 0.200L1.700 7.400" stroke="#999" stroke-width="1.200" fill="none"/></svg>
<div class="a" style="left:2184px;top:996.5px;width:8.200px;height:20px;overflow:hidden"><div class="t b" style="left:2.600px;top:0;color:#666;font-size:12px">N</div></div>
<svg style="left:289.8px;top:1038.1px" width="10" height="12.4" viewBox="0 0 10 12.4"><g fill="none" stroke="#4a4a4a" stroke-width="1.200"><path d="M0.300 2.500H9.700"/><path d="M2.700 2.300Q2.800 0.700 4.300 0.700H5.700Q7.200 0.700 7.300 2.300" fill="#bbb"/><path d="M1.300 2.700V10.600Q1.300 11.700 2.400 11.700H7.600Q8.700 11.700 8.700 10.600V2.700"/><rect x="3.300" y="5" width="3.400" height="4" fill="#aaa" stroke="none"/><path d="M3.700 4.800V9.200M6.300 4.800V9.200" stroke-width="1.300"/></g></svg>
<div class="t c" style="left:309.3px;width:60px;top:1035.7px;font-size:16px;color:#555;">5</div>
<div class="t" style="left:386px;width:398px;overflow:hidden;top:1026.2px;color:#555;">一阶段上线验收阶段一阶段上线验收阶段</div>
<svg style="left:782.7px;top:1055.7px" width="7.5" height="7.5" viewBox="0 0 7.5 7.5"><path d="M0.300 7.200L7.200 0.300M4.300 7.200L7.200 4.300" stroke="#555" stroke-width="0.950" fill="none"/></svg>
<svg style="left:785.8px;top:1043.05px" width="5.200" height="5.200" viewBox="0 0 6 6"><path d="M3.00 2.05L3.00 0.85M3.90 2.71L5.04 2.34M3.56 3.77L4.26 4.74M2.44 3.77L1.74 4.74M2.10 2.71L0.96 2.34" stroke="#d9001b" stroke-width="1.35" stroke-linecap="round" fill="none"/></svg>
<div class="t" style="left:801px;width:294px;overflow:hidden;top:1035.3px;color:#555;">P100000801_成都泰美克_财务部</div>
<svg style="left:1096.8px;top:1043.05px" width="5.200" height="5.200" viewBox="0 0 6 6"><path d="M3.00 2.05L3.00 0.85M3.90 2.71L5.04 2.34M3.56 3.77L4.26 4.74M2.44 3.77L1.74 4.74M2.10 2.71L0.96 2.34" stroke="#d9001b" stroke-width="1.35" stroke-linecap="round" fill="none"/></svg>
<div class="t" style="left:1110.8px;width:192px;overflow:hidden;top:1035.3px;color:#555;">客户管理员使用</div>
<svg style="left:1303.8px;top:1043.05px" width="5.200" height="5.200" viewBox="0 0 6 6"><path d="M3.00 2.05L3.00 0.85M3.90 2.71L5.04 2.34M3.56 3.77L4.26 4.74M2.44 3.77L1.74 4.74M2.10 2.71L0.96 2.34" stroke="#d9001b" stroke-width="1.35" stroke-linecap="round" fill="none"/></svg>
<div class="t" style="left:1318.4px;top:1034.85px;font-size:15.5px;color:#555;letter-spacing:-0.23px;">2025-05-15</div>
<svg style="left:1421.8px;top:1043.05px" width="5.200" height="5.200" viewBox="0 0 6 6"><path d="M3.00 2.05L3.00 0.85M3.90 2.71L5.04 2.34M3.56 3.77L4.26 4.74M2.44 3.77L1.74 4.74M2.10 2.71L0.96 2.34" stroke="#d9001b" stroke-width="1.35" stroke-linecap="round" fill="none"/></svg>
<div class="t" style="left:1436.1px;top:1034.85px;font-size:15.5px;color:#555;letter-spacing:-0.23px;">2025-05-30</div>
<svg style="left:1538.8px;top:1043.05px" width="5.200" height="5.200" viewBox="0 0 6 6"><path d="M3.00 2.05L3.00 0.85M3.90 2.71L5.04 2.34M3.56 3.77L4.26 4.74M2.44 3.77L1.74 4.74M2.10 2.71L0.96 2.34" stroke="#d9001b" stroke-width="1.35" stroke-linecap="round" fill="none"/></svg>
<div class="t c" style="left:1551.5px;width:40px;top:1035.3px;color:#555;">否</div>
<div class="t c" style="left:1605px;width:40px;top:1035.3px;color:#555;">否</div>
<div class="t c" style="left:1658px;width:40px;top:1035.3px;color:#555;">否</div>
<div class="t c" style="left:1711px;width:40px;top:1035.3px;color:#555;">否</div>
<div class="t c" style="left:1764px;width:40px;top:1035.3px;color:#555;">是</div>
<div class="t c" style="left:1817.5px;width:40px;top:1035.3px;color:#555;">否</div>
<div class="t c" style="left:1871px;width:40px;top:1035.3px;color:#555;">否</div>
<div class="t c" style="left:1924px;width:40px;top:1035.3px;color:#555;">否</div>
<div class="t c" style="left:1977px;width:40px;top:1035.3px;color:#555;">否</div>
<div class="t c" style="left:2030px;width:40px;top:1035.3px;color:#555;">否</div>
<div class="t c" style="left:2083.5px;width:40px;top:1035.3px;color:#555;">否</div>
<div class="t c" style="left:2137px;width:40px;top:1035.3px;color:#555;">否</div>
<svg style="left:2184px;top:1035px" width="3" height="8" viewBox="0 0 3 8"><path d="M0.400 0.200L1.700 7.400" stroke="#999" stroke-width="1.200" fill="none"/></svg>
<div class="a" style="left:2184px;top:1035.5px;width:8.200px;height:20px;overflow:hidden"><div class="t b" style="left:2.600px;top:0;color:#666;font-size:12px">N</div></div>
<svg style="left:289.8px;top:1077.1px" width="10" height="12.4" viewBox="0 0 10 12.4"><g fill="none" stroke="#4a4a4a" stroke-width="1.200"><path d="M0.300 2.500H9.700"/><path d="M2.700 2.300Q2.800 0.700 4.300 0.700H5.700Q7.200 0.700 7.300 2.300" fill="#bbb"/><path d="M1.300 2.700V10.600Q1.300 11.700 2.400 11.700H7.600Q8.700 11.700 8.700 10.600V2.700"/><rect x="3.300" y="5" width="3.400" height="4" fill="#aaa" stroke="none"/><path d="M3.700 4.800V9.200M6.300 4.800V9.200" stroke-width="1.300"/></g></svg>
<div class="t c" style="left:309.3px;width:60px;top:1074.7px;font-size:16px;color:#555;">6</div>
<div class="t" style="left:386px;width:389px;overflow:hidden;top:1065.2px;color:#555;">二阶段系统实现阶段（月度滚动预测、管理报表、预算分析、</div>
<div class="t" style="left:386px;width:389px;overflow:hidden;top:1084.2px;color:#555;">成本费用分摊、资金计划）二阶段系统实现阶段（月度滚动预</div>
<div class="a" style="left:776px;top:1065px;width:15px;height:24px;background:#fafafa;"></div>
<svg style="left:779.4px;top:1067.2px" width="8" height="5.4" viewBox="0 0 8 5.4"><path d="M0 5.400L4 0 8 5.400Z" fill="#8a8a8a"/></svg>
<div class="a" style="left:779.4px;top:1075.8px;width:8px;height:1px;background:#a8a8a8;"></div>
<svg style="left:779.4px;top:1080.8px" width="8" height="5.6" viewBox="0 0 8 5.6"><path d="M0 0H8L4 5.600Z" fill="#8a8a8a"/></svg>
<div class="a" style="left:776px;top:1088px;width:15px;height:15px;background:#fafafa;border:1px solid #dcdcdc;border-right:0;border-bottom:0;"></div>
<svg style="left:782.7px;top:1094.7px" width="7.5" height="7.5" viewBox="0 0 7.5 7.5"><path d="M0.300 7.200L7.200 0.300M4.300 7.200L7.200 4.300" stroke="#555" stroke-width="0.950" fill="none"/></svg>
<div class="t" style="left:801px;width:294px;overflow:hidden;top:1074.3px;color:#555;">P100000801_成都泰美克_财务部</div>
<svg style="left:1096.8px;top:1082.05px" width="5.200" height="5.200" viewBox="0 0 6 6"><path d="M3.00 2.05L3.00 0.85M3.90 2.71L5.04 2.34M3.56 3.77L4.26 4.74M2.44 3.77L1.74 4.74M2.10 2.71L0.96 2.34" stroke="#d9001b" stroke-width="1.35" stroke-linecap="round" fill="none"/></svg>
<div class="t" style="left:1110.8px;width:192px;overflow:hidden;top:1074.3px;color:#555;">客户管理员使用</div>
<svg style="left:1303.8px;top:1082.05px" width="5.200" height="5.200" viewBox="0 0 6 6"><path d="M3.00 2.05L3.00 0.85M3.90 2.71L5.04 2.34M3.56 3.77L4.26 4.74M2.44 3.77L1.74 4.74M2.10 2.71L0.96 2.34" stroke="#d9001b" stroke-width="1.35" stroke-linecap="round" fill="none"/></svg>
<div class="t" style="left:1318.4px;top:1073.85px;font-size:15.5px;color:#555;letter-spacing:-0.23px;">2025-06-03</div>
<svg style="left:1421.8px;top:1082.05px" width="5.200" height="5.200" viewBox="0 0 6 6"><path d="M3.00 2.05L3.00 0.85M3.90 2.71L5.04 2.34M3.56 3.77L4.26 4.74M2.44 3.77L1.74 4.74M2.10 2.71L0.96 2.34" stroke="#d9001b" stroke-width="1.35" stroke-linecap="round" fill="none"/></svg>
<div class="t" style="left:1436.1px;top:1073.85px;font-size:15.5px;color:#555;letter-spacing:-0.23px;">2025-07-10</div>
<svg style="left:1538.8px;top:1082.05px" width="5.200" height="5.200" viewBox="0 0 6 6"><path d="M3.00 2.05L3.00 0.85M3.90 2.71L5.04 2.34M3.56 3.77L4.26 4.74M2.44 3.77L1.74 4.74M2.10 2.71L0.96 2.34" stroke="#d9001b" stroke-width="1.35" stroke-linecap="round" fill="none"/></svg>
<div class="t c" style="left:1551.5px;width:40px;top:1074.3px;color:#555;">否</div>
<div class="t c" style="left:1605px;width:40px;top:1074.3px;color:#555;">否</div>
<div class="t c" style="left:1658px;width:40px;top:1074.3px;color:#555;">否</div>
<div class="t c" style="left:1711px;width:40px;top:1074.3px;color:#555;">否</div>
<div class="t c" style="left:1764px;width:40px;top:1074.3px;color:#555;">否</div>
<div class="t c" style="left:1817.5px;width:40px;top:1074.3px;color:#555;">是</div>
<div class="t c" style="left:1871px;width:40px;top:1074.3px;color:#555;">是</div>
<div class="t c" style="left:1924px;width:40px;top:1074.3px;color:#555;">否</div>
<div class="t c" style="left:1977px;width:40px;top:1074.3px;color:#555;">否</div>
<div class="t c" style="left:2030px;width:40px;top:1074.3px;color:#555;">否</div>
<div class="t c" style="left:2083.5px;width:40px;top:1074.3px;color:#555;">否</div>
<div class="t c" style="left:2137px;width:40px;top:1074.3px;color:#555;">否</div>
<svg style="left:2184px;top:1074px" width="3" height="8" viewBox="0 0 3 8"><path d="M0.400 0.200L1.700 7.400" stroke="#999" stroke-width="1.200" fill="none"/></svg>
<div class="a" style="left:2184px;top:1074.5px;width:8.200px;height:20px;overflow:hidden"><div class="t b" style="left:2.600px;top:0;color:#666;font-size:12px">N</div></div>
<svg style="left:289.8px;top:1116.1px" width="10" height="12.4" viewBox="0 0 10 12.4"><g fill="none" stroke="#4a4a4a" stroke-width="1.200"><path d="M0.300 2.500H9.700"/><path d="M2.700 2.300Q2.800 0.700 4.300 0.700H5.700Q7.200 0.700 7.300 2.300" fill="#bbb"/><path d="M1.300 2.700V10.600Q1.300 11.700 2.400 11.700H7.600Q8.700 11.700 8.700 10.600V2.700"/><rect x="3.300" y="5" width="3.400" height="4" fill="#aaa" stroke="none"/><path d="M3.700 4.800V9.200M6.300 4.800V9.200" stroke-width="1.300"/></g></svg>
<div class="t c" style="left:309.3px;width:60px;top:1113.7px;font-size:16px;color:#555;">7</div>
<div class="t" style="left:386px;width:389px;overflow:hidden;top:1104.2px;color:#555;">三阶段系统实现阶段（研发项目全周期管理、产品项目投前预</div>
<div class="t" style="left:386px;width:389px;overflow:hidden;top:1123.2px;color:#555;">测）三阶段系统实现阶段（研发项目全周期管理、产品项目投</div>
<div class="a" style="left:776px;top:1104px;width:15px;height:24px;background:#fafafa;"></div>
<svg style="left:779.4px;top:1106.2px" width="8" height="5.4" viewBox="0 0 8 5.4"><path d="M0 5.400L4 0 8 5.400Z" fill="#8a8a8a"/></svg>
<div class="a" style="left:779.4px;top:1114.8px;width:8px;height:1px;background:#a8a8a8;"></div>
<svg style="left:779.4px;top:1119.8px" width="8" height="5.6" viewBox="0 0 8 5.6"><path d="M0 0H8L4 5.600Z" fill="#8a8a8a"/></svg>
<div class="a" style="left:776px;top:1127px;width:15px;height:15px;background:#fafafa;border:1px solid #dcdcdc;border-right:0;border-bottom:0;"></div>
<svg style="left:782.7px;top:1133.7px" width="7.5" height="7.5" viewBox="0 0 7.5 7.5"><path d="M0.300 7.200L7.200 0.300M4.300 7.200L7.200 4.300" stroke="#555" stroke-width="0.950" fill="none"/></svg>
<div class="t" style="left:801px;width:294px;overflow:hidden;top:1113.3px;color:#555;">P100000801_成都泰美克_财务部</div>
<svg style="left:1096.8px;top:1121.05px" width="5.200" height="5.200" viewBox="0 0 6 6"><path d="M3.00 2.05L3.00 0.85M3.90 2.71L5.04 2.34M3.56 3.77L4.26 4.74M2.44 3.77L1.74 4.74M2.10 2.71L0.96 2.34" stroke="#d9001b" stroke-width="1.35" stroke-linecap="round" fill="none"/></svg>
<div class="t" style="left:1110.8px;width:192px;overflow:hidden;top:1113.3px;color:#555;">客户管理员使用</div>
<svg style="left:1303.8px;top:1121.05px" width="5.200" height="5.200" viewBox="0 0 6 6"><path d="M3.00 2.05L3.00 0.85M3.90 2.71L5.04 2.34M3.56 3.77L4.26 4.74M2.44 3.77L1.74 4.74M2.10 2.71L0.96 2.34" stroke="#d9001b" stroke-width="1.35" stroke-linecap="round" fill="none"/></svg>
<div class="t" style="left:1318.4px;top:1112.85px;font-size:15.5px;color:#555;letter-spacing:-0.23px;">2025-07-14</div>
<svg style="left:1421.8px;top:1121.05px" width="5.200" height="5.200" viewBox="0 0 6 6"><path d="M3.00 2.05L3.00 0.85M3.90 2.71L5.04 2.34M3.56 3.77L4.26 4.74M2.44 3.77L1.74 4.74M2.10 2.71L0.96 2.34" stroke="#d9001b" stroke-width="1.35" stroke-linecap="round" fill="none"/></svg>
<div class="t" style="left:1436.1px;top:1112.85px;font-size:15.5px;color:#555;letter-spacing:-0.23px;">2025-08-22</div>
<svg style="left:1538.8px;top:1121.05px" width="5.200" height="5.200" viewBox="0 0 6 6"><path d="M3.00 2.05L3.00 0.85M3.90 2.71L5.04 2.34M3.56 3.77L4.26 4.74M2.44 3.77L1.74 4.74M2.10 2.71L0.96 2.34" stroke="#d9001b" stroke-width="1.35" stroke-linecap="round" fill="none"/></svg>
<div class="t c" style="left:1551.5px;width:40px;top:1113.3px;color:#555;">否</div>
<div class="t c" style="left:1605px;width:40px;top:1113.3px;color:#555;">否</div>
<div class="t c" style="left:1658px;width:40px;top:1113.3px;color:#555;">否</div>
<div class="t c" style="left:1711px;width:40px;top:1113.3px;color:#555;">否</div>
<div class="t c" style="left:1764px;width:40px;top:1113.3px;color:#555;">否</div>
<div class="t c" style="left:1817.5px;width:40px;top:1113.3px;color:#555;">否</div>
<div class="t c" style="left:1871px;width:40px;top:1113.3px;color:#555;">是</div>
<div class="t c" style="left:1924px;width:40px;top:1113.3px;color:#555;">是</div>
<div class="t c" style="left:1977px;width:40px;top:1113.3px;color:#555;">否</div>
<div class="t c" style="left:2030px;width:40px;top:1113.3px;color:#555;">否</div>
<div class="t c" style="left:2083.5px;width:40px;top:1113.3px;color:#555;">否</div>
<div class="t c" style="left:2137px;width:40px;top:1113.3px;color:#555;">否</div>
<svg style="left:2184px;top:1113px" width="3" height="8" viewBox="0 0 3 8"><path d="M0.400 0.200L1.700 7.400" stroke="#999" stroke-width="1.200" fill="none"/></svg>
<div class="a" style="left:2184px;top:1113.5px;width:8.200px;height:20px;overflow:hidden"><div class="t b" style="left:2.600px;top:0;color:#666;font-size:12px">N</div></div>
</section>
</main>
</body></html>
